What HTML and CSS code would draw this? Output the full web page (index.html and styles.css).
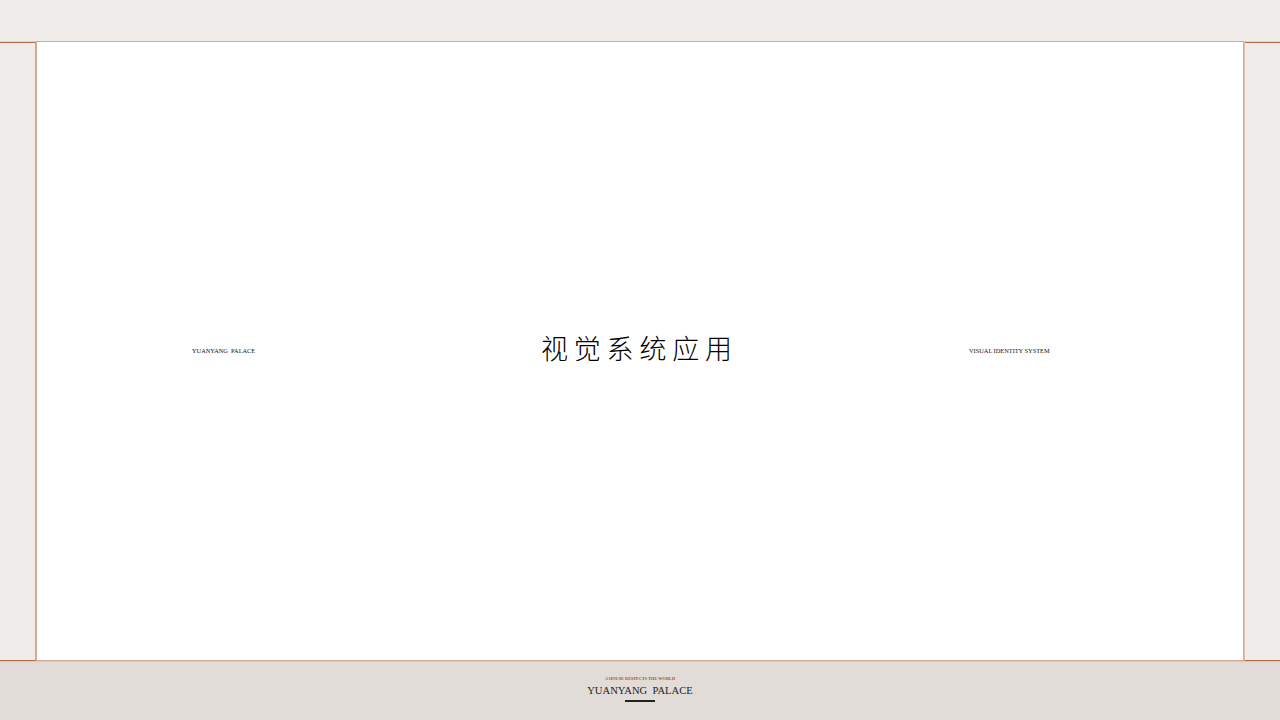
FILE: index.html
```html
<!DOCTYPE html>
<html lang="zh">
<head>
<meta charset="utf-8">
<title>视觉系统应用</title>
<link rel="stylesheet" href="styles.css">
</head>
<body>
<div class="page">
  <div class="top"></div>
  <div class="middle">
    <div class="side side-left"></div>
    <main class="sheet">
      <span class="label label-left">YUANYANG&nbsp; PALACE</span>
      <h1 class="title">视觉系统应用</h1>
      <span class="label label-right">VISUAL IDENTITY SYSTEM</span>
    </main>
    <div class="side side-right"></div>
  </div>
  <footer class="footer">
    <div class="motto">A HOUSE RESPECTS THE WORLD</div>
    <div class="brand">YUANYANG&nbsp; PALACE</div>
    <div class="rule"></div>
  </footer>
</div>
</body>
</html>
```
FILE: styles.css
```css
* { box-sizing: border-box; margin: 0; padding: 0; }
html, body { width: 1280px; height: 720px; overflow: hidden; background: #f0ecea; }
.page { width: 1280px; height: 720px; display: flex; flex-direction: column; }
.top { height: 41px; flex: none; background: #f0ecea; }
.middle { height: 620px; flex: none; display: flex; }
.side { width: 36px; flex: none; background: #f0ecea; border-top: 1px solid #e6d3c6; border-bottom: 1px solid #b86c42; box-shadow: inset 0 1px 0 #b86c42; }
.side-left { border-right: 1px solid #cfa58c; }
.side-right { border-left: 1px solid #dcc2b0; }
.sheet {
  flex: 1; background: #fff;
  border: 1px solid #d2ae98;
  display: flex; align-items: center;
  padding: 0 0 0 155px;
  font-family: "Liberation Serif", serif; color: #111;
}
.label { font-size: 6.35px; white-space: nowrap; position: relative; top: -1px; }
.label-left { width: 63px; margin-right: 287px; }
.label-right { margin-left: 237px; }
.title {
  width: 190px; white-space: nowrap;
  position: relative; top: -4px; left: -1px;
  font-family: "Noto Sans CJK SC", "Noto Sans CJK JP", sans-serif;
  font-weight: 300; font-size: 27px; letter-spacing: 5.8px; line-height: 1; color: #000;
}
.footer {
  flex: 1; background: #e1dcd8;
  border-top: 1px solid #d9c9bc;
  display: flex; flex-direction: column; align-items: center;
  padding-top: 14px;
  font-family: "Liberation Serif", serif;
}
.motto { font-size: 4.3px; line-height: 6px; color: #b0521f; font-weight: 700; }
.brand { font-size: 10.6px; line-height: 13px; margin-top: 2px; color: #222; }
.rule { width: 30px; height: 2px; background: #222; margin-top: 3px; }
```
